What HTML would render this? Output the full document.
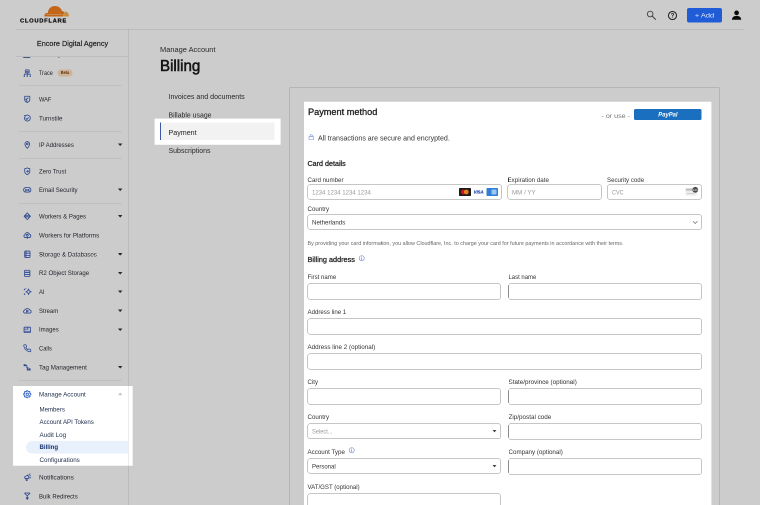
<!DOCTYPE html>
<html lang="en"><head><meta charset="utf-8"><title>Billing | Cloudflare</title>
<style>
html,body{margin:0;padding:0;background:#fff;}
body{width:760px;height:505px;overflow:hidden;position:relative;font-family:"Liberation Sans",sans-serif;}
#root{position:absolute;left:0;top:0;width:1520px;height:1010px;transform:scale(0.5);transform-origin:0 0;overflow:hidden;will-change:transform;}
.a{position:absolute;}
.t{white-space:nowrap;}
</style></head><body><div id="root">
<div class="a " style="left:32px;top:58px;width:1456px;height:1px;background:#d9d9d9;"></div>
<svg class="a" style="left:88px;top:11px;" width="50" height="23" viewBox="0 0 50 23"><path d="M1 22C0 18 3 14.500 8 14.500C8 6.500 14 1 22 1C29 1 34 5 36 11C38 11 39.500 12 40.500 14L38 22Z" fill="#f38020"/>
<path d="M38.800 22L41.300 12.300C46 11.300 50 15.500 50 22Z" fill="#fbb04c"/>
<path d="M5 18.300L37.500 17.700" stroke="#fbd9b5" stroke-width="1.1" fill="none"/></svg>
<div class="a t" style="top:34.05px;font-size:10.5px;line-height:14.70px;font-weight:700;color:#111;left:39.8px;transform-origin:0 50%;transform:scaleX(1.1147);letter-spacing:1.2px;-webkit-text-stroke:0.4px #111;">CLOUDFLARE</div>
<svg class="a" style="left:1290px;top:18px;" width="26" height="26" viewBox="0 0 26 26"><circle cx="10.300" cy="10" r="5.600" fill="none" stroke="#5a5a5a" stroke-width="1.900"/><path d="M14.500 14.300L21 20.800" stroke="#5a5a5a" stroke-width="2.300" stroke-linecap="round"/></svg>
<div class="a " style="left:1336.4px;top:22.2px;width:17.6px;height:17.6px;border:2px solid #222;border-radius:50%;box-sizing:border-box;"></div>
<div class="a t" style="top:23.05px;font-size:12.5px;line-height:17.50px;font-weight:700;color:#222;left:1336.4px;width:17.6px;text-align:center;transform-origin:50% 50%;transform:scaleX(1.0000);">?</div>
<svg class="a" style="left:1463px;top:20.4px;" width="20" height="20" viewBox="0 0 20 20"><circle cx="10.200" cy="5.800" r="4.700" fill="#0d0d0d"/><path d="M1 19.400C1 14.500 5 11.800 10.200 11.800S19.400 14.500 19.400 19.400Z" fill="#0d0d0d"/></svg>
<div class="a " style="left:256px;top:59px;width:1px;height:951px;background:#d9d9d9;"></div>
<div class="a t" style="top:78.40px;font-size:14px;line-height:19.60px;font-weight:400;color:#222;left:33px;width:224px;text-align:center;transform-origin:50% 50%;transform:scaleX(1.0411);-webkit-text-stroke:0.3px #222;">Encore Digital Agency</div>
<div class="a " style="left:32px;top:112px;width:224px;height:1px;background:#d9d9d9;"></div>
<svg class="a" style="left:45.8px;top:137.5px;color:#3558b4;" width="17" height="17" viewBox="0 0 20 20"><g fill="none" stroke="currentColor" stroke-width="1.9" stroke-linejoin="round" stroke-linecap="round"><rect x="5.5" y="2" width="9" height="7" rx="1"/><path d="M7.5 5.5h5M10 9v3M3 16.5v-4.5h14v4.5M10 12v4.5"/></g><circle cx="3" cy="17.3" r="1.4" fill="currentColor"/><circle cx="10" cy="17.3" r="1.4" fill="currentColor"/><circle cx="17" cy="17.3" r="1.4" fill="currentColor"/></svg>
<div class="a t" style="top:138.45px;font-size:12.5px;line-height:17.50px;font-weight:400;color:#2b2e36;left:78.2px;transform-origin:0 50%;transform:scaleX(0.8765);">Trace</div>
<svg class="a" style="left:45.8px;top:190.3px;color:#3558b4;" width="17" height="17" viewBox="0 0 20 20"><g fill="none" stroke="currentColor" stroke-width="1.9" stroke-linejoin="round" stroke-linecap="round"><path d="M4 3h12v8c0 3.5-2.5 5.5-6 6.5C6.500 16.5 4 14.500 4 11z"/><path d="M4 10h5v6M9 10c0-2 1.500-3 3-3"/></g></svg>
<div class="a t" style="top:191.25px;font-size:12.5px;line-height:17.50px;font-weight:400;color:#2b2e36;left:78.2px;transform-origin:0 50%;transform:scaleX(0.9082);">WAF</div>
<svg class="a" style="left:45.8px;top:227.9px;color:#3558b4;" width="17" height="17" viewBox="0 0 20 20"><g fill="none" stroke="currentColor" stroke-width="1.9" stroke-linejoin="round" stroke-linecap="round"><path d="M5.500 4.500A7 7 0 1 1 3.500 8"/><path d="M3 3.500l2.500 1.200-1 2.500"/><path d="M7 10.500l2.300 2.300 4-4.500"/></g></svg>
<div class="a t" style="top:228.85px;font-size:12.5px;line-height:17.50px;font-weight:400;color:#2b2e36;left:78.2px;transform-origin:0 50%;transform:scaleX(0.9859);">Turnstile</div>
<svg class="a" style="left:45.8px;top:280.7px;color:#3558b4;" width="17" height="17" viewBox="0 0 20 20"><g fill="none" stroke="currentColor" stroke-width="1.9" stroke-linejoin="round" stroke-linecap="round"><path d="M10 18.500C10 18.500 4.500 12.500 4.500 8a5.500 5.500 0 0 1 11 0C15.500 12.500 10 18.500 10 18.500z"/><circle cx="10" cy="8" r="2"/></g></svg>
<div class="a t" style="top:281.65px;font-size:12.5px;line-height:17.50px;font-weight:400;color:#2b2e36;left:78.2px;transform-origin:0 50%;transform:scaleX(0.9479);">IP Addresses</div>
<svg class="a" style="left:236px;top:286.8px;" width="8.8" height="5.2" viewBox="0 0 8.8 5.2"><path d="M0 0 L8.8 0 L4.4 5.2 Z" fill="#333"/></svg>
<svg class="a" style="left:45.8px;top:333.7px;color:#3558b4;" width="17" height="17" viewBox="0 0 20 20"><g fill="none" stroke="currentColor" stroke-width="1.9" stroke-linejoin="round" stroke-linecap="round"><path d="M10 2c2 1.500 4 2 6 2v6c0 4-3 6.500-6 8-3-1.500-6-4-6-8V4c2 0 4-.5 6-2z"/><path d="M8 10h5M11 8l2 2-2 2"/></g></svg>
<div class="a t" style="top:334.65px;font-size:12.5px;line-height:17.50px;font-weight:400;color:#2b2e36;left:78.2px;transform-origin:0 50%;transform:scaleX(0.9515);">Zero Trust</div>
<svg class="a" style="left:45.8px;top:371.3px;color:#3558b4;" width="17" height="17" viewBox="0 0 20 20"><g fill="none" stroke="currentColor" stroke-width="1.9" stroke-linejoin="round" stroke-linecap="round"><rect x="1.500" y="5" width="17" height="10.500" rx="4.500"/><path d="M5 8l5 3.500 5-3.500M5 13l3-2.500M15 13l-3-2.500"/></g></svg>
<div class="a t" style="top:372.25px;font-size:12.5px;line-height:17.50px;font-weight:400;color:#2b2e36;left:78.2px;transform-origin:0 50%;transform:scaleX(0.9639);">Email Security</div>
<svg class="a" style="left:236px;top:377.4px;" width="8.8" height="5.2" viewBox="0 0 8.8 5.2"><path d="M0 0 L8.8 0 L4.4 5.2 Z" fill="#333"/></svg>
<svg class="a" style="left:45.8px;top:424.3px;color:#3558b4;" width="17" height="17" viewBox="0 0 20 20"><g fill="none" stroke="currentColor" stroke-width="1.9" stroke-linejoin="round" stroke-linecap="round"><path d="M10 2l7.500 8-7.500 8-7.500-8z"/><path d="M7.500 6.500l-3 3.500 3 3.500M12.500 6.500l3 3.500-3 3.500"/><circle cx="10" cy="10" r="1.600"/></g></svg>
<div class="a t" style="top:425.25px;font-size:12.5px;line-height:17.50px;font-weight:400;color:#2b2e36;left:78.2px;transform-origin:0 50%;transform:scaleX(0.9688);">Workers &amp; Pages</div>
<svg class="a" style="left:236px;top:430.4px;" width="8.8" height="5.2" viewBox="0 0 8.8 5.2"><path d="M0 0 L8.8 0 L4.4 5.2 Z" fill="#333"/></svg>
<svg class="a" style="left:45.8px;top:462.1px;color:#3558b4;" width="17" height="17" viewBox="0 0 20 20"><g fill="none" stroke="currentColor" stroke-width="1.9" stroke-linejoin="round" stroke-linecap="round"><path d="M5.500 15.500h9a4 4 0 0 0 .8-7.900A5.500 5.500 0 0 0 4.700 8.200 3.800 3.800 0 0 0 5.500 15.500z"/><path d="M10 7l3 3-3 3-3-3zM10 15.500V18"/></g></svg>
<div class="a t" style="top:463.05px;font-size:12.5px;line-height:17.50px;font-weight:400;color:#2b2e36;left:78.2px;transform-origin:0 50%;transform:scaleX(0.9981);">Workers for Platforms</div>
<svg class="a" style="left:45.8px;top:499.9px;color:#3558b4;" width="17" height="17" viewBox="0 0 20 20"><g fill="none" stroke="currentColor" stroke-width="1.9" stroke-linejoin="round" stroke-linecap="round"><rect x="4" y="2.500" width="12.500" height="15" rx="2"/><path d="M4 7.500h12.500M4 12.500h12.500M7 2.500v15"/></g></svg>
<div class="a t" style="top:500.85px;font-size:12.5px;line-height:17.50px;font-weight:400;color:#2b2e36;left:78.2px;transform-origin:0 50%;transform:scaleX(0.9728);">Storage &amp; Databases</div>
<svg class="a" style="left:236px;top:506px;" width="8.8" height="5.2" viewBox="0 0 8.8 5.2"><path d="M0 0 L8.8 0 L4.4 5.2 Z" fill="#333"/></svg>
<svg class="a" style="left:45.8px;top:537.5px;color:#3558b4;" width="17" height="17" viewBox="0 0 20 20"><g fill="none" stroke="currentColor" stroke-width="1.9" stroke-linejoin="round" stroke-linecap="round"><rect x="3.500" y="3" width="13" height="4.800" rx="2.400"/><rect x="3.500" y="7.800" width="13" height="4.800" rx="2.400"/><rect x="3.500" y="12.600" width="13" height="4.800" rx="2.400"/></g></svg>
<div class="a t" style="top:538.45px;font-size:12.5px;line-height:17.50px;font-weight:400;color:#2b2e36;left:78.2px;transform-origin:0 50%;transform:scaleX(0.9744);">R2 Object Storage</div>
<svg class="a" style="left:236px;top:543.6px;" width="8.8" height="5.2" viewBox="0 0 8.8 5.2"><path d="M0 0 L8.8 0 L4.4 5.2 Z" fill="#333"/></svg>
<svg class="a" style="left:45.8px;top:574.9px;color:#3558b4;" width="17" height="17" viewBox="0 0 20 20"><g fill="none" stroke="currentColor" stroke-width="1.9" stroke-linejoin="round" stroke-linecap="round"><path d="M13 3.300c.7 3.700 2.500 5.600 6.200 6.700-3.700 1.100-5.500 3-6.200 6.700-.7-3.700-2.500-5.600-6.200-6.700 3.700-1.100 5.500-3 6.200-6.700z"/></g><circle cx="3.600" cy="4.600" r="1.700" fill="currentColor"/><circle cx="3.600" cy="15.600" r="1.700" fill="currentColor"/><circle cx="7" cy="2.600" r="1" fill="currentColor"/></svg>
<div class="a t" style="top:575.85px;font-size:12.5px;line-height:17.50px;font-weight:400;color:#2b2e36;left:78.2px;transform-origin:0 50%;transform:scaleX(0.9314);">AI</div>
<svg class="a" style="left:236px;top:581px;" width="8.8" height="5.2" viewBox="0 0 8.8 5.2"><path d="M0 0 L8.8 0 L4.4 5.2 Z" fill="#333"/></svg>
<svg class="a" style="left:45.8px;top:612.9px;color:#3558b4;" width="17" height="17" viewBox="0 0 20 20"><g fill="none" stroke="currentColor" stroke-width="1.9" stroke-linejoin="round" stroke-linecap="round"><path d="M4.200 15.500h12a3.300 3.300 0 0 0 .6-6.500A7 5.800 0 0 0 3.600 8.700 3.500 3.500 0 0 0 4.200 15.500z"/><path d="M8.500 8.300l4.200 2.500-4.200 2.500z"/></g></svg>
<div class="a t" style="top:613.85px;font-size:12.5px;line-height:17.50px;font-weight:400;color:#2b2e36;left:78.2px;transform-origin:0 50%;transform:scaleX(0.9531);">Stream</div>
<svg class="a" style="left:236px;top:619px;" width="8.8" height="5.2" viewBox="0 0 8.8 5.2"><path d="M0 0 L8.8 0 L4.4 5.2 Z" fill="#333"/></svg>
<svg class="a" style="left:45.8px;top:650.5px;color:#3558b4;" width="17" height="17" viewBox="0 0 20 20"><g fill="none" stroke="currentColor" stroke-width="1.9" stroke-linejoin="round" stroke-linecap="round"><rect x="2.500" y="4" width="15" height="12.500" rx="1"/><path d="M2.500 8.500h9v-4.500M2.500 13.500h15"/></g></svg>
<div class="a t" style="top:651.45px;font-size:12.5px;line-height:17.50px;font-weight:400;color:#2b2e36;left:78.2px;transform-origin:0 50%;transform:scaleX(0.9612);">Images</div>
<svg class="a" style="left:236px;top:656.6px;" width="8.8" height="5.2" viewBox="0 0 8.8 5.2"><path d="M0 0 L8.8 0 L4.4 5.2 Z" fill="#333"/></svg>
<svg class="a" style="left:45.8px;top:688.3px;color:#3558b4;" width="17" height="17" viewBox="0 0 20 20"><g fill="none" stroke="currentColor" stroke-width="2.200" stroke-linejoin="round" stroke-linecap="round" transform="scale(.833)"><path d="M22 16.920v3a2 2 0 0 1-2.180 2 19.790 19.790 0 0 1-8.630-3.070 19.500 19.500 0 0 1-6-6 19.790 19.790 0 0 1-3.070-8.670A2 2 0 0 1 4.110 2h3a2 2 0 0 1 2 1.720 12.840 12.840 0 0 0 .7 2.810 2 2 0 0 1-.45 2.110L8.090 9.910a16 16 0 0 0 6 6l1.270-1.270a2 2 0 0 1 2.110-.45 12.840 12.840 0 0 0 2.810.7A2 2 0 0 1 22 16.920z"/></g></svg>
<div class="a t" style="top:689.25px;font-size:12.5px;line-height:17.50px;font-weight:400;color:#2b2e36;left:78.2px;transform-origin:0 50%;transform:scaleX(0.9286);">Calls</div>
<svg class="a" style="left:45.8px;top:725.9px;color:#3558b4;" width="17" height="17" viewBox="0 0 20 20"><g fill="none" stroke="currentColor" stroke-width="1.9" stroke-linejoin="round" stroke-linecap="round"><path d="M6 5.500h3v5.500h3v5.500h5.500"/></g><rect x="1.500" y="3" width="5" height="4.500" fill="currentColor"/><rect x="9" y="12.500" width="3.500" height="5" fill="currentColor"/><rect x="14" y="12.500" width="3.500" height="5" fill="currentColor"/></svg>
<div class="a t" style="top:726.85px;font-size:12.5px;line-height:17.50px;font-weight:400;color:#2b2e36;left:78.2px;transform-origin:0 50%;transform:scaleX(0.9918);">Tag Management</div>
<svg class="a" style="left:236px;top:732px;" width="8.8" height="5.2" viewBox="0 0 8.8 5.2"><path d="M0 0 L8.8 0 L4.4 5.2 Z" fill="#333"/></svg>
<div class="a " style="left:45.6px;top:114.2px;width:15.6px;height:1.8px;background:#5a6ea8;border-radius:0 0 3px 3px;"></div>
<div class="a " style="left:116.4px;top:114px;width:2.4px;height:1.8px;background:#aaa;"></div>
<div class="a " style="left:114.6px;top:138.6px;width:30px;height:14.4px;background:#ffdfc0;border-radius:8px;"></div>
<div class="a t" style="top:140.45px;font-size:8.5px;line-height:11.90px;font-weight:700;color:#7a3f0a;left:114.6px;width:30px;text-align:center;transform-origin:50% 50%;transform:scaleX(0.9200);">Beta</div>
<div class="a " style="left:38px;top:171px;width:206px;height:1px;background:#e2e2e2;"></div>
<div class="a " style="left:38px;top:262px;width:206px;height:1px;background:#e2e2e2;"></div>
<div class="a " style="left:38px;top:316px;width:206px;height:1px;background:#e2e2e2;"></div>
<div class="a " style="left:38px;top:407.2px;width:206px;height:1px;background:#e2e2e2;"></div>
<div class="a " style="left:38px;top:760px;width:206px;height:1px;background:#e2e2e2;"></div>
<svg class="a" style="left:45.8px;top:779.5px;color:#2c5cc5;" width="17" height="17" viewBox="0 0 20 20"><g fill="none" stroke="currentColor" stroke-width="1.9" stroke-linejoin="round" stroke-linecap="round"><path d="M18.49 8.65L18.49 11.35L16.42 11.54L15.63 13.45L16.96 15.05L15.05 16.96L13.45 15.63L11.54 16.42L11.35 18.49L8.65 18.49L8.46 16.42L6.55 15.63L4.95 16.96L3.04 15.05L4.37 13.45L3.58 11.54L1.51 11.35L1.51 8.65L3.58 8.46L4.37 6.55L3.04 4.95L4.95 3.04L6.55 4.37L8.46 3.58L8.65 1.51L11.35 1.51L11.54 3.58L13.45 4.37L15.05 3.04L16.96 4.95L15.63 6.55L16.42 8.46Z"/><circle cx="10" cy="10" r="2.800"/></g></svg>
<div class="a t" style="top:780.65px;font-size:12.5px;line-height:17.50px;font-weight:400;color:#1b2a4a;left:78.2px;transform-origin:0 50%;transform:scaleX(1.0051);">Manage Account</div>
<svg class="a" style="left:235.6px;top:785.4px;" width="8.8" height="5.2" viewBox="0 0 8.8 5.2"><path d="M0 5.2 L4.4 0 L8.8 5.2 Z" fill="#bcc2cf"/></svg>
<div class="a " style="left:51.6px;top:882px;width:204.4px;height:25px;background:#e8f0fc;border-radius:13px 0 0 13px;"></div>
<div class="a t" style="top:811.25px;font-size:12.5px;line-height:17.50px;font-weight:400;color:#1b2a4a;left:79px;transform-origin:0 50%;transform:scaleX(0.9751);">Members</div>
<div class="a t" style="top:836.45px;font-size:12.5px;line-height:17.50px;font-weight:400;color:#1b2a4a;left:79px;transform-origin:0 50%;transform:scaleX(0.9788);">Account API Tokens</div>
<div class="a t" style="top:861.65px;font-size:12.5px;line-height:17.50px;font-weight:400;color:#1b2a4a;left:79px;transform-origin:0 50%;transform:scaleX(1.0072);">Audit Log</div>
<div class="a t" style="top:912.05px;font-size:12.5px;line-height:17.50px;font-weight:400;color:#1b2a4a;left:79px;transform-origin:0 50%;transform:scaleX(0.9999);">Configurations</div>
<div class="a t" style="top:886.45px;font-size:12.5px;line-height:17.50px;font-weight:700;color:#15306f;left:79px;transform-origin:0 50%;transform:scaleX(0.9741);">Billing</div>
<svg class="a" style="left:45.8px;top:946.3px;color:#3558b4;" width="17" height="17" viewBox="0 0 20 20"><g fill="none" stroke="currentColor" stroke-width="1.9" stroke-linejoin="round" stroke-linecap="round"><path d="M3.500 9.500l8-5 2.500 8-9 .5z"/><path d="M6.500 13l1 4.500h2.500l-.5-4.500M14.500 3.500l2-1.500M15.500 7l2.500-.5M16 10.500l2 1"/></g></svg>
<div class="a t" style="top:947.25px;font-size:12.5px;line-height:17.50px;font-weight:400;color:#2b2e36;left:78.2px;transform-origin:0 50%;transform:scaleX(1.0222);">Notifications</div>
<svg class="a" style="left:45.8px;top:984.1px;color:#3558b4;" width="17" height="17" viewBox="0 0 20 20"><g fill="none" stroke="currentColor" stroke-width="1.9" stroke-linejoin="round" stroke-linecap="round"><path d="M4 2.500h12M4 2.500c0 3 6 4 6 7.500M16 2.500c0 3-6 4-6 7.500v5"/><path d="M7.500 13.500l2.500 4 2.500-4z" fill="currentColor"/></g></svg>
<div class="a t" style="top:985.05px;font-size:12.5px;line-height:17.50px;font-weight:400;color:#2b2e36;left:78.2px;transform-origin:0 50%;transform:scaleX(0.9605);">Bulk Redirects</div>
<div class="a t" style="top:90.40px;font-size:14px;line-height:19.60px;font-weight:400;color:#333;left:320px;transform-origin:0 50%;transform:scaleX(1.0642);">Manage Account</div>
<div class="a t" style="top:109.50px;font-size:31px;line-height:43.40px;font-weight:400;color:#1d1d1d;left:320.2px;transform-origin:0 50%;transform:scaleX(0.9745);-webkit-text-stroke:1.2px #1d1d1d;">Billing</div>
<div class="a t" style="top:184.40px;font-size:14px;line-height:19.60px;font-weight:400;color:#333;left:336.8px;transform-origin:0 50%;transform:scaleX(1.0094);">Invoices and documents</div>
<div class="a t" style="top:220.60px;font-size:14px;line-height:19.60px;font-weight:400;color:#333;left:336.8px;transform-origin:0 50%;transform:scaleX(0.9865);">Billable usage</div>
<div class="a t" style="top:292.20px;font-size:14px;line-height:19.60px;font-weight:400;color:#333;left:336.8px;transform-origin:0 50%;transform:scaleX(0.9995);">Subscriptions</div>
<div class="a " style="left:319.6px;top:245.2px;width:229.8px;height:35px;background:#f2f2f2;border-left:2px solid #3f57a8;box-sizing:border-box;"></div>
<div class="a t" style="top:256.40px;font-size:14px;line-height:19.60px;font-weight:400;color:#222;left:336.8px;transform-origin:0 50%;transform:scaleX(1.0172);">Payment</div>
<div class="a " style="left:579px;top:174.8px;width:860px;height:865.2px;border:1px solid #c6c6c6;box-sizing:border-box;"></div>
<div class="a t" style="top:212.35px;font-size:17.5px;line-height:24.50px;font-weight:400;color:#222;left:615.6px;transform-origin:0 50%;transform:scaleX(1.0477);-webkit-text-stroke:0.6px #222;">Payment method</div>
<div class="a t" style="top:223.35px;font-size:13.5px;line-height:18.90px;font-weight:400;color:#767676;left:1203.2px;transform-origin:0 50%;transform:scaleX(1.0516);">- or use -</div>
<div class="a " style="left:1267.6px;top:217.6px;width:135.6px;height:22.4px;background:#1a6fbf;border-radius:3px;"></div>
<div class="a t" style="top:221.05px;font-size:12.5px;line-height:17.50px;font-weight:700;color:#fff;left:1267.6px;width:135.6px;text-align:center;transform-origin:50% 50%;transform:scaleX(0.9365);font-style:italic;">PayPal</div>
<svg class="a" style="left:617px;top:267.8px;" width="11" height="12.4" viewBox="0 0 11 12.400"><rect x="1" y="5" width="9" height="6.600" rx="1.200" fill="none" stroke="#7f98df" stroke-width="1.300"/><path d="M3.200 5V3.600a2.300 2.300 0 0 1 4.600 0V5" fill="none" stroke="#7f98df" stroke-width="1.300"/></svg>
<div class="a t" style="top:267.40px;font-size:14px;line-height:19.60px;font-weight:400;color:#333;left:636.4px;transform-origin:0 50%;transform:scaleX(1.0081);">All transactions are secure and encrypted.</div>
<div class="a t" style="top:318.00px;font-size:14px;line-height:19.60px;font-weight:400;color:#222;left:615.2px;transform-origin:0 50%;transform:scaleX(1.0227);-webkit-text-stroke:0.5px #222;">Card details</div>
<div class="a t" style="top:351.65px;font-size:12.5px;line-height:17.50px;font-weight:400;color:#333;left:615.2px;transform-origin:0 50%;transform:scaleX(0.9869);">Card number</div>
<div class="a t" style="top:351.65px;font-size:12.5px;line-height:17.50px;font-weight:400;color:#333;left:1014.6px;transform-origin:0 50%;transform:scaleX(0.9929);">Expiration date</div>
<div class="a t" style="top:351.65px;font-size:12.5px;line-height:17.50px;font-weight:400;color:#333;left:1214.2px;transform-origin:0 50%;transform:scaleX(0.9797);">Security code</div>
<div class="a " style="left:614.6px;top:368.6px;width:389.8px;height:30.8px;border:1px solid #8c8c8c;border-radius:5px;box-sizing:border-box;background:#fff;"></div>
<div class="a t" style="top:377.00px;font-size:12px;line-height:16.80px;font-weight:400;color:#9a9a9a;left:623.8px;transform-origin:0 50%;transform:scaleX(1.0070);">1234 1234 1234 1234</div>
<div class="a " style="left:1014.6px;top:368.6px;width:189.2px;height:30.8px;border:1px solid #8c8c8c;border-radius:5px;box-sizing:border-box;background:#fff;"></div>
<div class="a t" style="top:377.00px;font-size:12px;line-height:16.80px;font-weight:400;color:#9a9a9a;left:1023.8px;transform-origin:0 50%;transform:scaleX(1.0352);">MM / YY</div>
<div class="a " style="left:1214.4px;top:368.6px;width:189.2px;height:30.8px;border:1px solid #8c8c8c;border-radius:5px;box-sizing:border-box;background:#fff;"></div>
<div class="a t" style="top:377.00px;font-size:12px;line-height:16.80px;font-weight:400;color:#9a9a9a;left:1223.6px;transform-origin:0 50%;transform:scaleX(0.9157);">CVC</div>
<div class="a " style="left:918.4px;top:375.6px;width:23.2px;height:16px;background:#1f1a17;border-radius:1.5px;"></div>
<svg class="a" style="left:918.4px;top:375.6px;" width="23.2" height="16" viewBox="0 0 23.2 16"><circle cx="8.6" cy="8" r="4.800" fill="#d4111e"/><circle cx="14.6" cy="8" r="4.800" fill="#f08a1c" fill-opacity=".92"/></svg>
<div class="a " style="left:945.6px;top:375.6px;width:23.2px;height:16px;background:#fff;border-radius:1.5px;"></div>
<div class="a t" style="top:379.05px;font-size:8.5px;line-height:11.90px;font-weight:700;color:#1a3fb0;left:945.6px;width:23.2px;text-align:center;transform-origin:50% 50%;transform:scaleX(1.0000);-webkit-text-stroke:0.3px #1a3fb0;font-style:italic;">VISA</div>
<div class="a " style="left:972.8px;top:375.6px;width:23.2px;height:16px;background:#2f7fd6;border-radius:1.5px;"></div>
<div class="a " style="left:983px;top:379px;width:10px;height:9.6px;background:#9cc7f2;"></div>
<svg class="a" style="left:1371px;top:373px;" width="27" height="20" viewBox="0 0 27 20"><rect x="0.5" y="2.500" width="22" height="15.500" rx="2" fill="#ececec"/><rect x="0.5" y="4.500" width="22" height="3.600" fill="#b9b9b9"/><rect x="3" y="13" width="15" height="1.800" fill="#cfcfcf"/><circle cx="19.600" cy="6.600" r="5.800" fill="#4c4c4c"/><text x="19.600" y="8.600" font-size="5.500" text-anchor="middle" fill="#fff" font-family="Liberation Sans, sans-serif">123</text></svg>
<div class="a t" style="top:410.25px;font-size:12.5px;line-height:17.50px;font-weight:400;color:#333;left:615.2px;transform-origin:0 50%;transform:scaleX(0.9870);">Country</div>
<div class="a " style="left:614.6px;top:428.6px;width:789px;height:30.6px;border:1px solid #8c8c8c;border-radius:5px;box-sizing:border-box;background:#fff;"></div>
<div class="a t" style="top:436.90px;font-size:12px;line-height:16.80px;font-weight:400;color:#333;left:623.8px;transform-origin:0 50%;transform:scaleX(1.0293);">Netherlands</div>
<svg class="a" style="left:1385.2px;top:441.3px;" width="10.8" height="8" viewBox="0 0 10.800 8"><path d="M1 1.500L5.400 6l4.400-4.500" fill="none" stroke="#6e6e6e" stroke-width="1.400"/></svg>
<div class="a t" style="top:478.85px;font-size:10.5px;line-height:14.70px;font-weight:400;color:#666;left:615.2px;transform-origin:0 50%;transform:scaleX(1.0284);">By providing your card information, you allow Cloudflare, Inc. to charge your card for future payments in accordance with their terms.</div>
<div class="a t" style="top:509.60px;font-size:14px;line-height:19.60px;font-weight:400;color:#222;left:615px;transform-origin:0 50%;transform:scaleX(1.0412);-webkit-text-stroke:0.5px #222;">Billing address</div>
<svg class="a" style="left:717px;top:510.2px;" width="12.8" height="12.8" viewBox="0 0 12.8 12.8"><circle cx="6.4" cy="6.4" r="5.100" fill="none" stroke="#6a84cc" stroke-width="1.150"/><path d="M6.4 5.700V9.500" stroke="#4f6cc0" stroke-width="1.300"/><circle cx="6.4" cy="3.800" r=".85" fill="#4f6cc0"/></svg>
<div class="a t" style="top:545.65px;font-size:12.5px;line-height:17.50px;font-weight:400;color:#333;left:615px;transform-origin:0 50%;transform:scaleX(0.9722);">First name</div>
<div class="a t" style="top:545.65px;font-size:12.5px;line-height:17.50px;font-weight:400;color:#333;left:1016.6px;transform-origin:0 50%;transform:scaleX(0.9526);">Last name</div>
<div class="a " style="left:614.6px;top:566.8px;width:387px;height:32.2px;border:1px solid #8c8c8c;border-radius:5px;box-sizing:border-box;background:#fff;"></div>
<div class="a " style="left:1016.4px;top:566.8px;width:387.2px;height:32.2px;border:1px solid #8c8c8c;border-radius:5px;box-sizing:border-box;background:#fff;"></div>
<div class="a t" style="top:615.85px;font-size:12.5px;line-height:17.50px;font-weight:400;color:#333;left:615px;transform-origin:0 50%;transform:scaleX(0.9771);">Address line 1</div>
<div class="a " style="left:614.6px;top:637px;width:789px;height:32.2px;border:1px solid #8c8c8c;border-radius:5px;box-sizing:border-box;background:#fff;"></div>
<div class="a t" style="top:685.85px;font-size:12.5px;line-height:17.50px;font-weight:400;color:#333;left:615px;transform-origin:0 50%;transform:scaleX(1.0044);">Address line 2 (optional)</div>
<div class="a " style="left:614.6px;top:707px;width:789px;height:32.2px;border:1px solid #8c8c8c;border-radius:5px;box-sizing:border-box;background:#fff;"></div>
<div class="a t" style="top:756.05px;font-size:12.5px;line-height:17.50px;font-weight:400;color:#333;left:615px;transform-origin:0 50%;transform:scaleX(0.9755);">City</div>
<div class="a t" style="top:756.05px;font-size:12.5px;line-height:17.50px;font-weight:400;color:#333;left:1016.6px;transform-origin:0 50%;transform:scaleX(1.0081);">State/province (optional)</div>
<div class="a " style="left:614.6px;top:777.2px;width:387px;height:32.2px;border:1px solid #8c8c8c;border-radius:5px;box-sizing:border-box;background:#fff;"></div>
<div class="a " style="left:1016.4px;top:777.2px;width:387.2px;height:32.2px;border:1px solid #8c8c8c;border-radius:5px;box-sizing:border-box;background:#fff;"></div>
<div class="a t" style="top:826.05px;font-size:12.5px;line-height:17.50px;font-weight:400;color:#333;left:615px;transform-origin:0 50%;transform:scaleX(0.9870);">Country</div>
<div class="a t" style="top:826.05px;font-size:12.5px;line-height:17.50px;font-weight:400;color:#333;left:1016.6px;transform-origin:0 50%;transform:scaleX(1.0098);">Zip/postal code</div>
<div class="a " style="left:614.6px;top:847px;width:387px;height:30.6px;border:1px solid #8c8c8c;border-radius:5px;box-sizing:border-box;background:#fff;"></div>
<div class="a t" style="top:855.30px;font-size:12px;line-height:16.80px;font-weight:400;color:#9a9a9a;left:623.8px;transform-origin:0 50%;transform:scaleX(0.9457);">Select...</div>
<svg class="a" style="left:985px;top:860.1px;" width="8" height="4.8" viewBox="0 0 8 4.800"><path d="M0 0L8 0L4 4.800Z" fill="#444"/></svg>
<div class="a " style="left:1016.4px;top:847.2px;width:387.2px;height:32.2px;border:1px solid #8c8c8c;border-radius:5px;box-sizing:border-box;background:#fff;"></div>
<div class="a t" style="top:895.85px;font-size:12.5px;line-height:17.50px;font-weight:400;color:#333;left:615px;transform-origin:0 50%;transform:scaleX(0.9905);">Account Type</div>
<div class="a t" style="top:895.85px;font-size:12.5px;line-height:17.50px;font-weight:400;color:#333;left:1016.6px;transform-origin:0 50%;transform:scaleX(0.9955);">Company (optional)</div>
<div class="a " style="left:614.6px;top:916.8px;width:387px;height:30.6px;border:1px solid #8c8c8c;border-radius:5px;box-sizing:border-box;background:#fff;"></div>
<div class="a t" style="top:925.10px;font-size:12px;line-height:16.80px;font-weight:400;color:#333;left:623.8px;transform-origin:0 50%;transform:scaleX(1.0008);">Personal</div>
<svg class="a" style="left:985px;top:929.9px;" width="8" height="4.8" viewBox="0 0 8 4.800"><path d="M0 0L8 0L4 4.800Z" fill="#444"/></svg>
<div class="a " style="left:1016.4px;top:917px;width:387.2px;height:32.2px;border:1px solid #8c8c8c;border-radius:5px;box-sizing:border-box;background:#fff;"></div>
<div class="a t" style="top:966.05px;font-size:12.5px;line-height:17.50px;font-weight:400;color:#333;left:615px;transform-origin:0 50%;transform:scaleX(0.9758);">VAT/GST (optional)</div>
<div class="a " style="left:614.6px;top:987.2px;width:387px;height:32.2px;border:1px solid #8c8c8c;border-radius:5px;box-sizing:border-box;background:#fff;"></div>
<svg class="a" style="left:697.4px;top:894.4px;" width="12.8" height="12.8" viewBox="0 0 12.8 12.8"><circle cx="6.4" cy="6.4" r="5.100" fill="none" stroke="#6a84cc" stroke-width="1.150"/><path d="M6.4 5.700V9.500" stroke="#4f6cc0" stroke-width="1.300"/><circle cx="6.4" cy="3.800" r=".85" fill="#4f6cc0"/></svg>
<svg class="a" style="left:0;top:0" width="1520" height="1010"><path d="M0 0H1520V1010H0ZM309.2 237.2H561.2V289.6H309.2ZM26 772H265.4V931.4H26ZM608 203.6H1422.8V1014H608Z" fill="#000" fill-opacity="0.2" fill-rule="evenodd"/></svg>
<div class="a " style="left:1374px;top:16.2px;width:70px;height:28.6px;background:#1f5cd6;border-radius:4px;"></div>
<div class="a t" style="top:22.30px;font-size:13px;line-height:18.20px;font-weight:400;color:#dfe8fb;left:1374px;width:70px;text-align:center;transform-origin:50% 50%;transform:scaleX(1.1482);">+ Add</div>
</div></body></html>
